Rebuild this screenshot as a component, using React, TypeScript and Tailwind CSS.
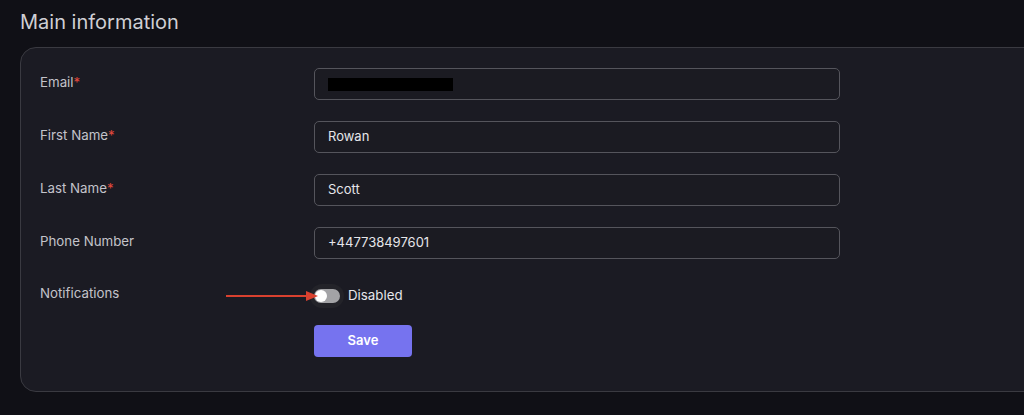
import type { ReactNode } from 'react'

function Row({ label, required, children }: { label: string; required?: boolean; children: ReactNode }) {
  return (
    <div className="grid grid-cols-[274px_526px] items-start">
      <div className="pt-[4px] text-[13.3px] leading-5 text-[#c3c3ca]">
        {label}
        {required && <span className="text-[#e0483c]">*</span>}
      </div>
      {children}
    </div>
  )
}

function Field({ children }: { children?: ReactNode }) {
  return (
    <div className="flex h-[32px] items-center rounded-[5px] border border-[#55555c] bg-[#1b1b22] px-[13px] text-[13px] text-[#e6e6ea]">
      {children}
    </div>
  )
}

export default function App() {
  return (
    <div className="h-[415px] w-[1024px] overflow-hidden bg-[#101016] pl-[20px] pt-[8px] font-['Inter','Liberation_Sans',sans-serif]">
      <h1 className="text-[20px] leading-[28px] text-[#cfcfd4]">Main information</h1>
      <div className="relative mt-[11px] h-[345px] w-[1040px] rounded-[16px] border border-[#3a3a41] bg-[#1b1b23] pl-[19px] pt-[20px]">
        <div className="flex flex-col gap-[21px]">
          <Row label="Email" required>
            <Field>
              <div className="h-[13px] w-[125px] bg-black" />
            </Field>
          </Row>
          <Row label="First Name" required>
            <Field>Rowan</Field>
          </Row>
          <Row label="Last Name" required>
            <Field>Scott</Field>
          </Row>
          <Row label="Phone Number">
            <Field>+447738497601</Field>
          </Row>
        </div>
        <div className="mt-[23px] grid h-[28px] grid-cols-[274px_526px] items-center">
          <div className="-mt-[6px] text-[13.3px] leading-5 text-[#c3c3ca]">Notifications</div>
          <div className="flex items-center gap-[9px]">
            <div className="-ml-[4px] -mr-[5px] flex h-[24px] w-[34px] items-center justify-center rounded-full bg-[#232329]">
              <div className="flex h-[14px] w-[26px] items-center rounded-full bg-[#a3a3a6] px-[1px]">
                <div className="h-[12px] w-[12px] rounded-full bg-white" />
              </div>
            </div>
            <span className="text-[13.3px] text-[#e6e6ea]">Disabled</span>
          </div>
        </div>
        <div className="mt-[15px] grid grid-cols-[274px_526px]">
          <div />
          <button className="h-[32px] w-[98px] rounded-[4px] bg-[#7673ef] text-[13px] font-semibold text-white">
            Save
          </button>
        </div>
        <svg className="absolute left-[204px] top-[241px]" width="94" height="14" viewBox="0 0 94 14">
          <line x1="1" y1="7" x2="84" y2="7" stroke="#d9412f" strokeWidth="1.8" />
          <path d="M81 2 L93 7 L81 12 Z" fill="#d9412f" />
        </svg>
      </div>
    </div>
  )
}
